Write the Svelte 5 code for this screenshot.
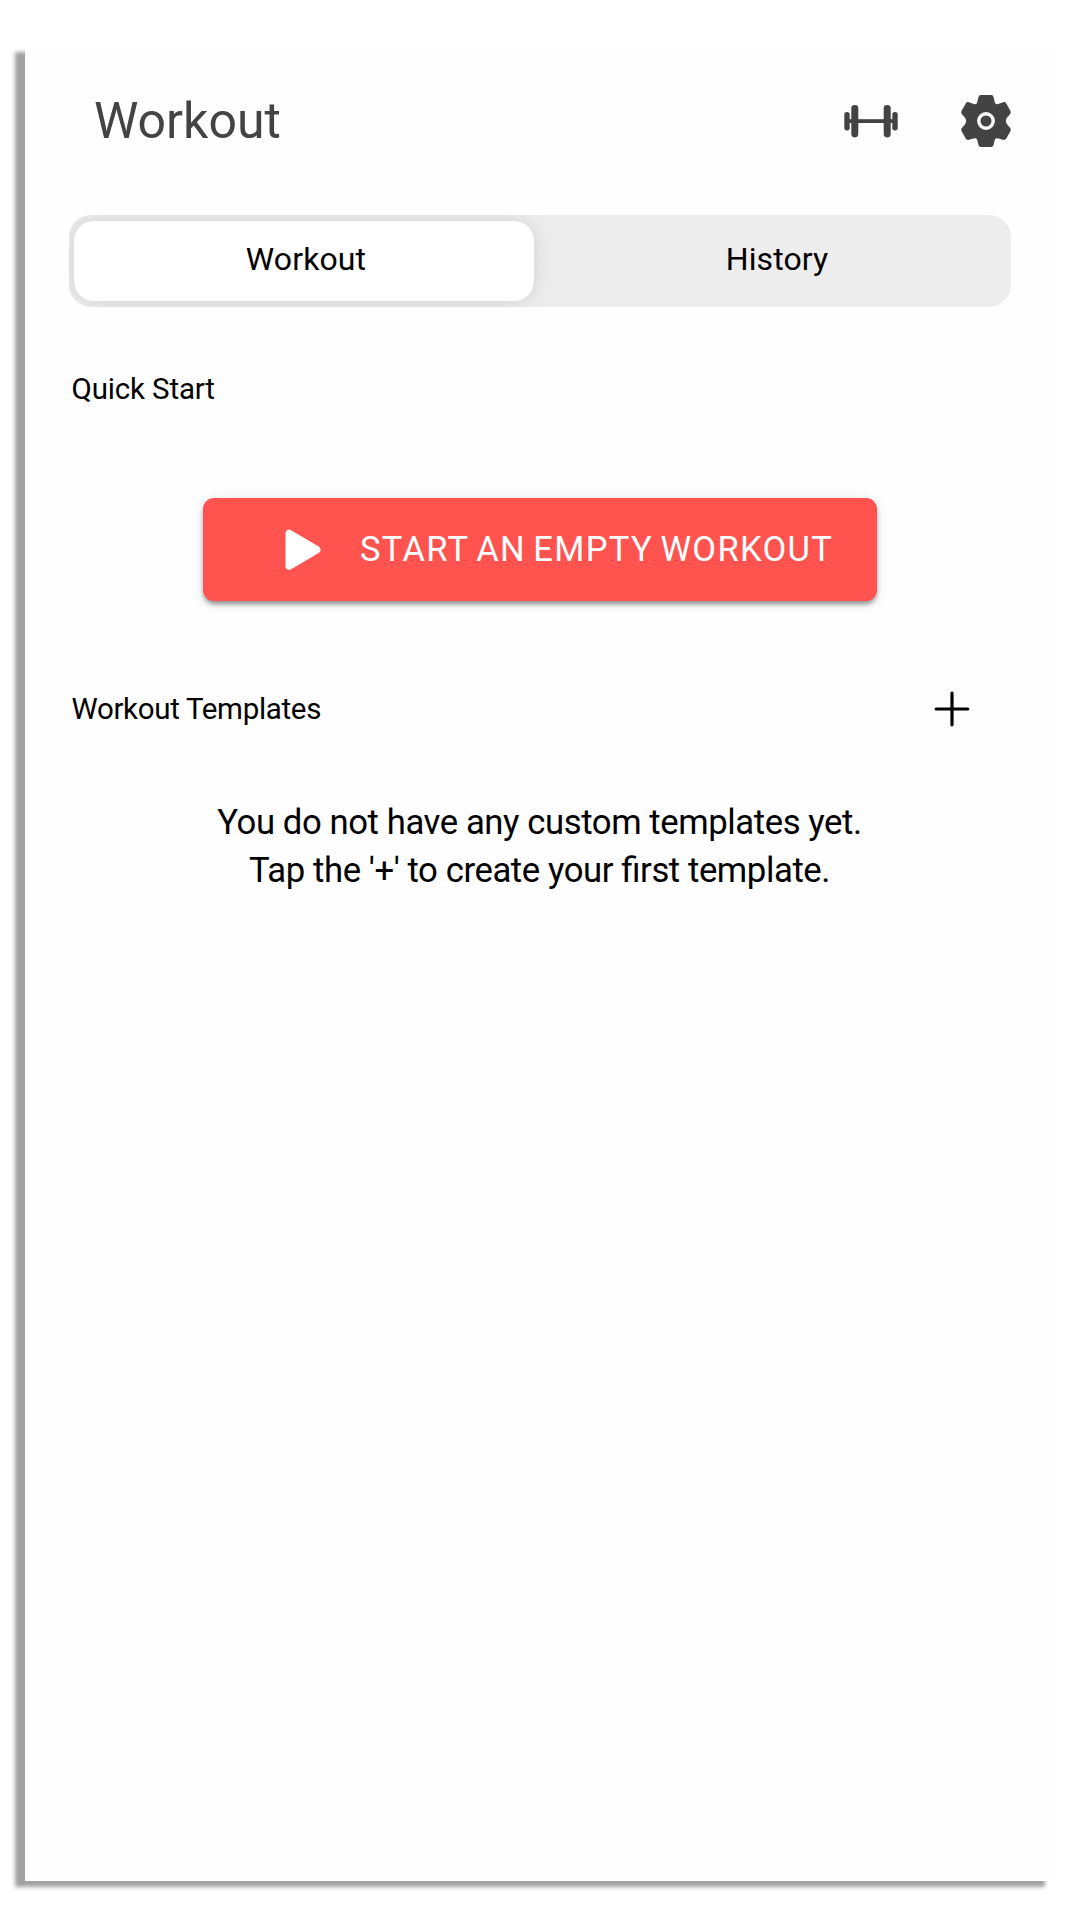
<script>
  let activeTab = $state('Workout');
  const tabs = ['Workout', 'History'];
</script>

<div class="page">
  <main class="screen">
    <header class="topbar">
      <h1>Workout</h1>
      <div class="actions">
        <button class="icon-button" aria-label="Exercises">
          <svg width="54" height="34" viewBox="0 0 54 34" fill="#434343">
            <rect x="4" y="15.2" width="46" height="3.8" />
            <rect x="0.3" y="8" width="5.4" height="18.4" rx="2.6" />
            <rect x="7.3" y="1" width="7" height="32.4" rx="3.3" />
            <rect x="39.7" y="1" width="7" height="32.4" rx="3.3" />
            <rect x="48.3" y="8" width="5.4" height="18.4" rx="2.6" />
          </svg>
        </button>
        <button class="icon-button" aria-label="Settings">
          <svg width="52" height="54" viewBox="-26 -27 52 54">
            <path
              fill="#434343"
              d="M-5 -26H5Q7.2 -26 7.6 -23.8L8.8 -18.8Q9.3 -16.4 11.6 -16.8L17 -18.8Q19.1 -19.5 20.3 -17.6L24.5 -9.9Q25.5 -8 23.8 -6.5L21.1 -3.4Q18.5 0 21.1 3.4L23.8 6.5Q25.5 8 24.5 9.9L20.3 17.6Q19.1 19.5 17 18.8L11.6 17.3Q9.3 16.9 8.8 18.8L7.6 23.8Q7.2 26 5 26H-5Q-7.2 26 -7.6 23.8L-8.8 18.8Q-9.3 16.9 -11.6 17.3L-17 18.8Q-19.1 19.5 -20.3 17.6L-24.5 9.9Q-25.5 8 -23.8 6.5L-21.1 3.4Q-18.5 0 -21.1 -3.4L-23.8 -6.5Q-25.5 -8 -24.5 -9.9L-20.3 -17.6Q-19.1 -19.5 -17 -18.8L-11.6 -16.8Q-9.3 -16.4 -8.8 -18.8L-7.6 -23.8Q-7.2 -26 -5 -26Z"
            />
            <circle r="7.2" fill="none" stroke="#fefefe" stroke-width="3.4" />
          </svg>
        </button>
      </div>
    </header>

    <div class="tabs" role="tablist">
      {#each tabs as tab}
        <button
          class="tab"
          class:active={activeTab === tab}
          class:history={tab === 'History'}
          role="tab"
          aria-selected={activeTab === tab}
          onclick={() => (activeTab = tab)}>{tab}</button
        >
      {/each}
    </div>

    <h2 class="quick">Quick Start</h2>

    <button class="start">
      <svg width="36" height="42" viewBox="0 0 36 42">
        <path d="M4.2 4.4V37L31.8 20.8Z" fill="#fff" stroke="#fff" stroke-width="7.4" stroke-linejoin="round" />
      </svg>
      <span>START AN EMPTY WORKOUT</span>
    </button>

    <div class="section-row">
      <h2 class="templates">Workout Templates</h2>
      <button class="icon-button" aria-label="Add template">
        <svg width="36" height="36" viewBox="0 0 36 36">
          <path d="M18 2.2V33.8M2.2 18H33.8" stroke="#000" stroke-width="3.2" stroke-linecap="round" />
        </svg>
      </button>
    </div>

    <p class="empty">
      <span>You do not have any custom templates yet.</span>
      <span>Tap the '+' to create your first template.</span>
    </p>
  </main>
</div>

<style>
  :global(body) {
    margin: 0;
    background: #fff;
  }

  .page {
    box-sizing: border-box;
    width: 1080px;
    height: 1927px;
    padding: 46px 0 0 25px;
    overflow: hidden;
  }

  .screen {
    box-sizing: border-box;
    width: 1030px;
    height: 1835px;
    padding: 45px 43px 0 44px;
    display: flex;
    flex-direction: column;
    background: #fefefe;
    box-shadow: -9.8px 6px 4px #a2a2a2;
    font-family: Roboto, 'Liberation Sans', sans-serif;
    color: #000;
  }

  button {
    margin: 0;
    padding: 0;
    border: 0;
    background: none;
    font: inherit;
    color: inherit;
  }

  h1,
  h2,
  p {
    margin: 0;
    font-weight: 400;
    white-space: nowrap;
  }

  .icon-button {
    display: flex;
  }

  .topbar {
    height: 60px;
    padding-left: 25px;
    display: flex;
    align-items: center;
    justify-content: space-between;
  }

  h1 {
    font-size: 50px;
    line-height: 60px;
    letter-spacing: 0;
    color: #434343;
  }

  .actions {
    display: flex;
    align-items: center;
    gap: 62px;
  }

  .tabs {
    box-sizing: border-box;
    height: 92px;
    margin: 64px 1px 0 0;
    padding: 6px 5px;
    display: grid;
    grid-template-columns: 460px 1fr;
    border-radius: 22px;
    background: #ededed;
    overflow: hidden;
  }

  .tab {
    padding: 0 0 4px 4px;
    border-radius: 20px;
    font-size: 32px;
    letter-spacing: 0.1px;
  }

  .tab.history {
    padding-left: 14px;
  }

  .tab.active {
    background: #fff;
    box-shadow: 0 0 20px rgba(0, 0, 0, 0.12);
  }

  h2 {
    font-size: 29.5px;
    line-height: 40px;
    padding-left: 2.5px;
  }

  .quick {
    margin-top: 62px;
    letter-spacing: -0.15px;
  }

  .templates {
    letter-spacing: -0.32px;
  }

  .start {
    width: 674px;
    height: 103px;
    margin: 89px 0 0 134px;
    padding-left: 82px;
    display: flex;
    align-items: center;
    gap: 39px;
    border-radius: 11px;
    background: #ff5350;
    color: #fff;
    box-shadow:
      0 4px 5px -1px rgba(0, 0, 0, 0.4),
      0 2px 13px rgba(0, 0, 0, 0.12);
  }

  .start span {
    padding-bottom: 2px;
    font-size: 34.5px;
    letter-spacing: 1.35px;
    word-spacing: -2.6px;
    white-space: nowrap;
  }

  .section-row {
    height: 40px;
    margin-top: 88px;
    padding-right: 42px;
    display: flex;
    align-items: center;
    justify-content: space-between;
  }

  .empty {
    margin-top: 69px;
    padding-right: 2px;
    display: flex;
    flex-direction: column;
    align-items: center;
    font-size: 34.7px;
    line-height: 48px;
    letter-spacing: -0.42px;
    font-feature-settings: 'liga' 1;
  }
</style>
